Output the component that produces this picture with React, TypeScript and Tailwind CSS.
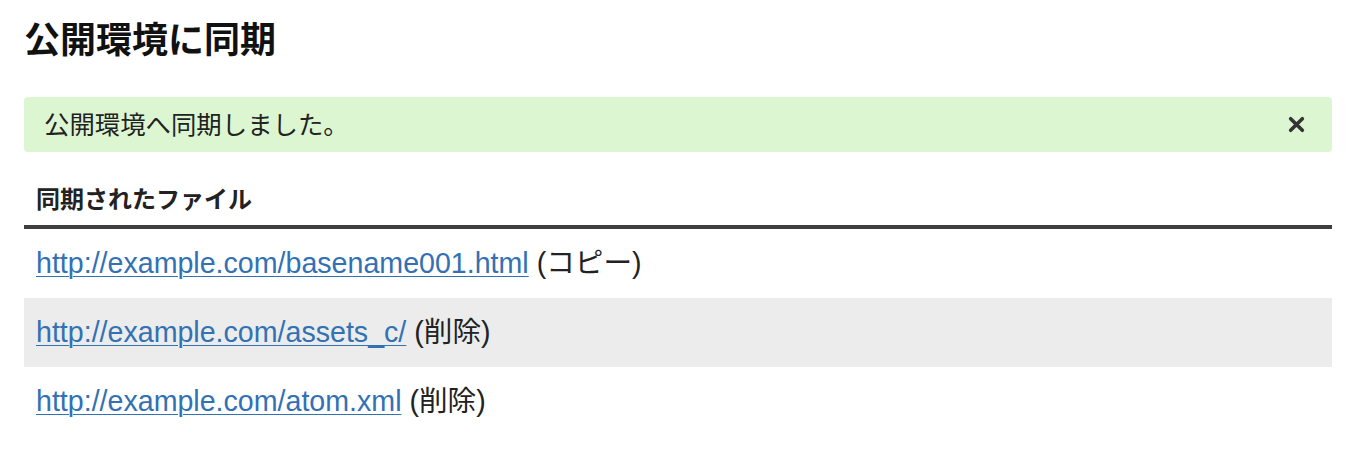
const files = [
  { url: "http://example.com/basename001.html", action: "コピー" },
  { url: "http://example.com/assets_c/", action: "削除" },
  { url: "http://example.com/atom.xml", action: "削除" },
];

const fontStack = "font-['Liberation_Sans','Noto_Sans_CJK_JP',sans-serif]";

export default function App() {
  return (
    <div className={`bg-white pl-6 pr-[18px] pt-[20px] pb-4 text-[#222] ${fontStack}`}>
      <h1 className="text-[36px] font-bold leading-[42px] text-[#111]">公開環境に同期</h1>

      <div className="mt-[35px] flex h-[55px] items-center justify-between rounded-[4px] bg-[#ddf6d2] pl-[20px] pr-[27px]">
        <span className="text-[25.4px] leading-[34px] text-[#222]">公開環境へ同期しました。</span>
        <button type="button" className="flex h-[18px] w-[18px] items-center justify-center text-[#333]">
          <svg viewBox="0 0 16 16" className="h-[17px] w-[17px]">
            <path d="M2.5 2.5 L13.5 13.5 M13.5 2.5 L2.5 13.5" stroke="currentColor" strokeWidth="3.4" strokeLinecap="round" />
          </svg>
        </button>
      </div>

      <div className="mt-[20px]">
        <div className="border-b-4 border-[#3f3f3f] px-3 pt-[11px] pb-[9px]">
          <span className="text-[24px] font-bold leading-[33px] text-[#222]">同期されたファイル</span>
        </div>
        {files.map((f, i) => (
          <div
            key={f.url}
            className={[
              "px-3 py-[14px] text-[28.6px] leading-[41px]",
              i % 2 === 1 ? "bg-[#ececec]" : "bg-white",
            ].join(" ")}
          >
            <a href="#" className="text-[#3271b4] underline decoration-1 underline-offset-[3px]">
              {f.url}
            </a>{" "}
            <span className="text-[#222]">({f.action})</span>
          </div>
        ))}
      </div>
    </div>
  );
}
